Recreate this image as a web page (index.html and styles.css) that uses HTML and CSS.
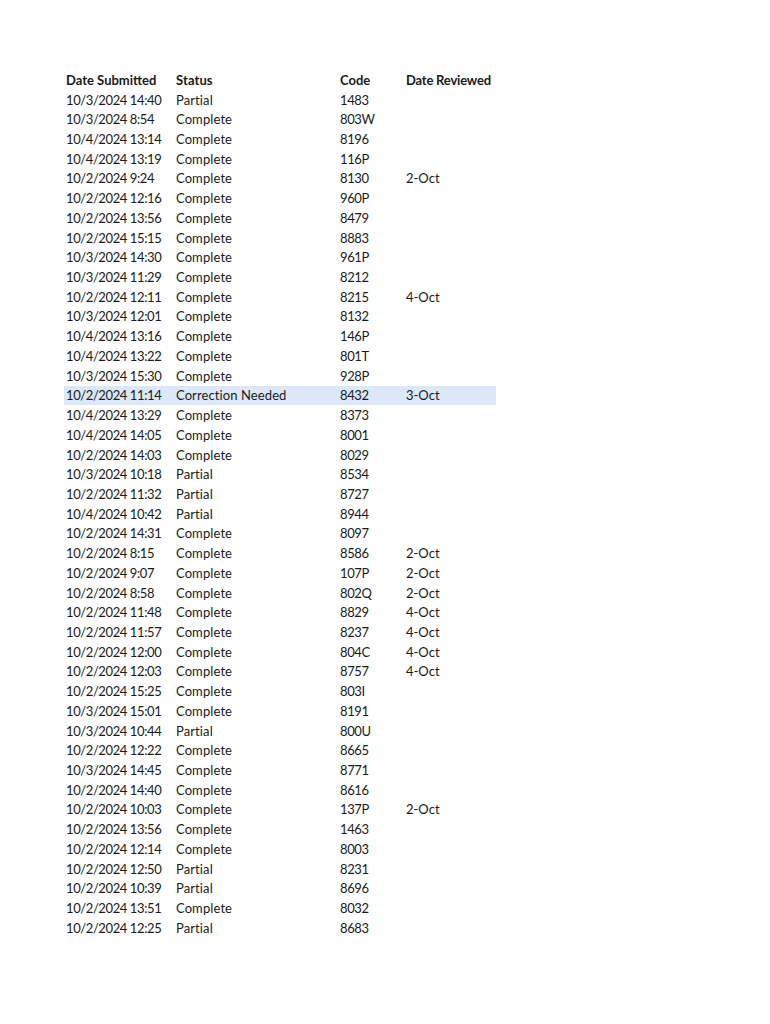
FILE: index.html
```html
<!DOCTYPE html>
<html>
<head>
<meta charset="utf-8">
<link rel="stylesheet" href="styles.css">
</head>
<body>
<div class="sheet">
  <div class="row head"><span>Date Submitted</span><span>Status</span><span>Code</span><span>Date Reviewed</span></div>
  <div class="row"><span>10/3/2024 14:40</span><span>Partial</span><span>1483</span><span></span></div>
  <div class="row"><span>10/3/2024 8:54</span><span>Complete</span><span>803W</span><span></span></div>
  <div class="row"><span>10/4/2024 13:14</span><span>Complete</span><span>8196</span><span></span></div>
  <div class="row"><span>10/4/2024 13:19</span><span>Complete</span><span>116P</span><span></span></div>
  <div class="row"><span>10/2/2024 9:24</span><span>Complete</span><span>8130</span><span>2-Oct</span></div>
  <div class="row"><span>10/2/2024 12:16</span><span>Complete</span><span>960P</span><span></span></div>
  <div class="row"><span>10/2/2024 13:56</span><span>Complete</span><span>8479</span><span></span></div>
  <div class="row"><span>10/2/2024 15:15</span><span>Complete</span><span>8883</span><span></span></div>
  <div class="row"><span>10/3/2024 14:30</span><span>Complete</span><span>961P</span><span></span></div>
  <div class="row"><span>10/3/2024 11:29</span><span>Complete</span><span>8212</span><span></span></div>
  <div class="row"><span>10/2/2024 12:11</span><span>Complete</span><span>8215</span><span>4-Oct</span></div>
  <div class="row"><span>10/3/2024 12:01</span><span>Complete</span><span>8132</span><span></span></div>
  <div class="row"><span>10/4/2024 13:16</span><span>Complete</span><span>146P</span><span></span></div>
  <div class="row"><span>10/4/2024 13:22</span><span>Complete</span><span>801T</span><span></span></div>
  <div class="row"><span>10/3/2024 15:30</span><span>Complete</span><span>928P</span><span></span></div>
  <div class="row hl"><span>10/2/2024 11:14</span><span>Correction Needed</span><span>8432</span><span>3-Oct</span></div>
  <div class="row"><span>10/4/2024 13:29</span><span>Complete</span><span>8373</span><span></span></div>
  <div class="row"><span>10/4/2024 14:05</span><span>Complete</span><span>8001</span><span></span></div>
  <div class="row"><span>10/2/2024 14:03</span><span>Complete</span><span>8029</span><span></span></div>
  <div class="row"><span>10/3/2024 10:18</span><span>Partial</span><span>8534</span><span></span></div>
  <div class="row"><span>10/2/2024 11:32</span><span>Partial</span><span>8727</span><span></span></div>
  <div class="row"><span>10/4/2024 10:42</span><span>Partial</span><span>8944</span><span></span></div>
  <div class="row"><span>10/2/2024 14:31</span><span>Complete</span><span>8097</span><span></span></div>
  <div class="row"><span>10/2/2024 8:15</span><span>Complete</span><span>8586</span><span>2-Oct</span></div>
  <div class="row"><span>10/2/2024 9:07</span><span>Complete</span><span>107P</span><span>2-Oct</span></div>
  <div class="row"><span>10/2/2024 8:58</span><span>Complete</span><span>802Q</span><span>2-Oct</span></div>
  <div class="row"><span>10/2/2024 11:48</span><span>Complete</span><span>8829</span><span>4-Oct</span></div>
  <div class="row"><span>10/2/2024 11:57</span><span>Complete</span><span>8237</span><span>4-Oct</span></div>
  <div class="row"><span>10/2/2024 12:00</span><span>Complete</span><span>804C</span><span>4-Oct</span></div>
  <div class="row"><span>10/2/2024 12:03</span><span>Complete</span><span>8757</span><span>4-Oct</span></div>
  <div class="row"><span>10/2/2024 15:25</span><span>Complete</span><span>803I</span><span></span></div>
  <div class="row"><span>10/3/2024 15:01</span><span>Complete</span><span>8191</span><span></span></div>
  <div class="row"><span>10/3/2024 10:44</span><span>Partial</span><span>800U</span><span></span></div>
  <div class="row"><span>10/2/2024 12:22</span><span>Complete</span><span>8665</span><span></span></div>
  <div class="row"><span>10/3/2024 14:45</span><span>Complete</span><span>8771</span><span></span></div>
  <div class="row"><span>10/2/2024 14:40</span><span>Complete</span><span>8616</span><span></span></div>
  <div class="row"><span>10/2/2024 10:03</span><span>Complete</span><span>137P</span><span>2-Oct</span></div>
  <div class="row"><span>10/2/2024 13:56</span><span>Complete</span><span>1463</span><span></span></div>
  <div class="row"><span>10/2/2024 12:14</span><span>Complete</span><span>8003</span><span></span></div>
  <div class="row"><span>10/2/2024 12:50</span><span>Partial</span><span>8231</span><span></span></div>
  <div class="row"><span>10/2/2024 10:39</span><span>Partial</span><span>8696</span><span></span></div>
  <div class="row"><span>10/2/2024 13:51</span><span>Complete</span><span>8032</span><span></span></div>
  <div class="row"><span>10/2/2024 12:25</span><span>Partial</span><span>8683</span><span></span></div>
</div>
</body>
</html>
```
FILE: styles.css
```css
html, body {
  margin: 0;
  padding: 0;
  background: #ffffff;
}
body {
  font-family: Lato, "Open Sans", sans-serif;
  font-size: 13px;
  color: #1a1a1a;
}
.sheet {
  padding: 70px 0 0 64px;
  width: 432px;
}
.row {
  display: grid;
  grid-template-columns: 110px 164px 66px 92px;
  height: 19.72px;
  align-items: center;
}
.row span {
  padding-left: 2px;
  white-space: nowrap;
}
.row span:nth-child(1),
.row span:nth-child(3) {
  letter-spacing: -0.4px;
}
.row span:nth-child(2) {
  letter-spacing: 0.1px;
}
.head span:nth-child(1),
.head span:nth-child(3) {
  letter-spacing: 0;
}
.head {
  font-weight: bold;
}
.head span:nth-child(4) {
  letter-spacing: -0.2px;
}
.hl {
  background: #dce8f7;
}
```
